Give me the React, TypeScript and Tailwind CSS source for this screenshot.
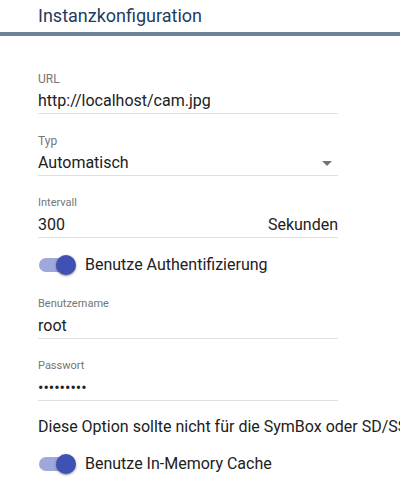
import React from "react";

const Field = ({
    label,
    value,
    suffix,
    select,
    small,
}: {
    label: string;
    value: string;
    suffix?: string;
    select?: boolean;
    small?: boolean;
}) => {
    return (
        <div className="flex flex-col w-[300px] border-b border-[#e0e0e0]">
            <span className={`${small ? "text-[11px]" : "text-[12px]"} leading-[16px] text-[#757575]`}>{label}</span>
            <div className="flex items-center h-[24px] mt-[2px] text-[16px] text-[#212121]">
                <span className="flex-1">{value}</span>
                {suffix && <span>{suffix}</span>}
                {select && (
                    <svg width="10" height="5" viewBox="0 0 10 5" className="mr-[6px]">
                        <path d="M0 0h10L5 5z" fill="#757575" />
                    </svg>
                )}
            </div>
        </div>
    );
};

const Toggle = ({ label }: { label: string }) => {
    return (
        <div className="flex items-center h-[38px] ml-[-11px]">
            <div className="relative w-[58px] h-[38px]">
                <div className="absolute left-[12px] top-[12px] w-[34px] h-[14px] rounded-full bg-[#9fa8da]" />
                <div className="absolute left-[29px] top-[9px] w-[20px] h-[20px] rounded-full bg-[#3f51b5] shadow-[0_1px_3px_rgba(0,0,0,0.3),0_1px_1px_rgba(0,0,0,0.2)]" />
            </div>
            <span className="text-[16px] text-[#212121]">{label}</span>
        </div>
    );
};

const App = () => {
    return (
        <div className="w-[400px] h-[500px] overflow-hidden bg-white font-['Roboto',sans-serif]">
            <div className="h-[32px] pl-[38px] flex items-center">
                <span className="text-[18px] text-[#1f3c5f] leading-[24px] mt-[-1px]">Instanzkonfiguration</span>
            </div>
            <div className="h-[4px] bg-[#6b8299]" />
            <div className="flex flex-col pl-[38px] pt-[35px]">
                <Field label="URL" value="http://localhost/cam.jpg" />
                <div className="mt-[19px]">
                    <Field label="Typ" value="Automatisch" select />
                </div>
                <div className="mt-[19px]">
                    <Field label="Intervall" value="300" suffix="Sekunden" small />
                </div>
                <div className="mt-[8px]">
                    <Toggle label="Benutze Authentifizierung" />
                </div>
                <div className="mt-[12px]">
                    <Field label="Benutzername" value="root" small />
                </div>
                <div className="mt-[19px]">
                    <Field label="Passwort" value="•••••••••" small />
                </div>
                <p className="mt-[14px] text-[16px] leading-[24px] text-[#212121] whitespace-nowrap">
                    Diese Option sollte nicht für die SymBox oder SD/SSD-Karten verwendet werden.
                </p>
                <div className="mt-[6px]">
                    <Toggle label="Benutze In-Memory Cache" />
                </div>
            </div>
        </div>
    );
};

export default App;
